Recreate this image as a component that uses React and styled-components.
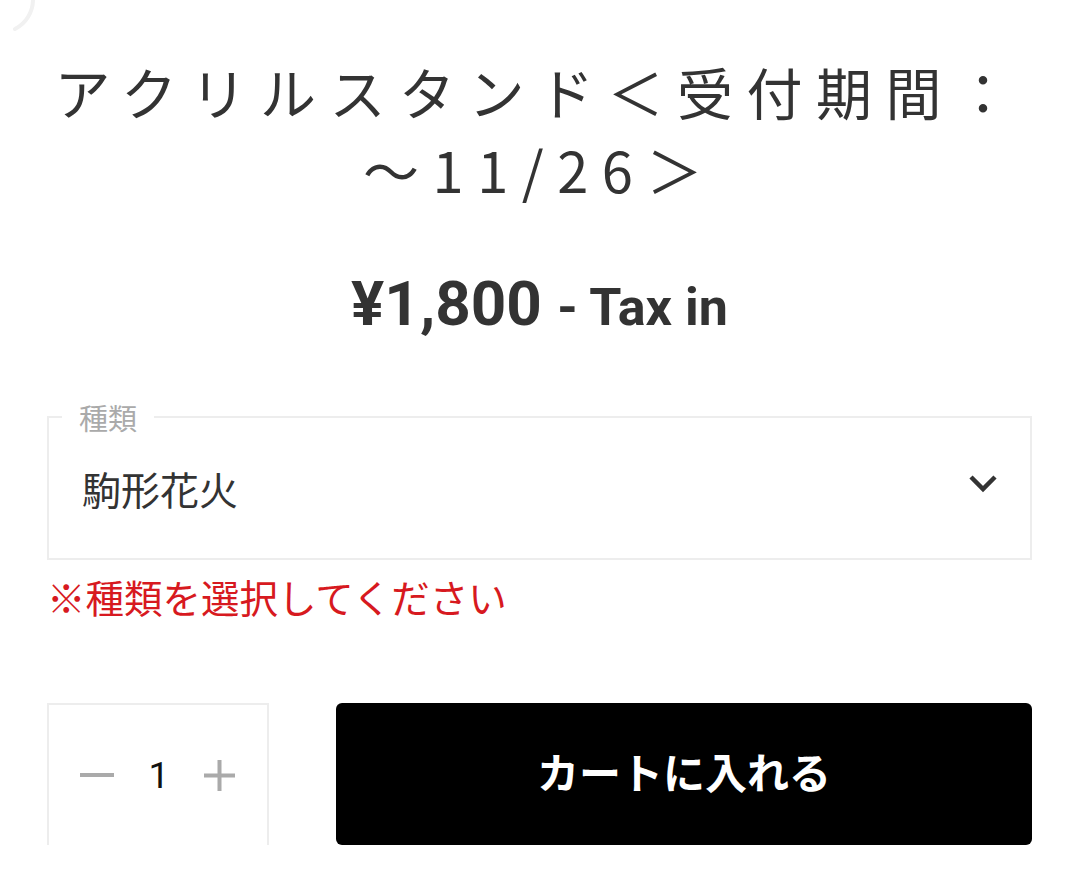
import React, { useState } from 'react';
import styled, { createGlobalStyle } from 'styled-components';

const GlobalStyle = createGlobalStyle`
  html, body { margin: 0; padding: 0; background: #fff; }
  body { font-family: "Noto Sans CJK JP", "Noto Sans", sans-serif; color: #333; }
`;

const Page = styled.div`
  position: relative;
  width: 1080px;
  height: 872px;
  box-sizing: border-box;
  padding: 52px 48px 0 47px;
  overflow: hidden;
`;

// faint spinner arc peeking in at the top-left corner
const CornerArc = styled.svg`
  position: absolute;
  left: 0;
  top: 0;
`;

const Title = styled.h1`
  margin: 0;
  text-align: center;
  font-size: 56px;
  font-weight: 400;
  line-height: 78px;
  letter-spacing: 13.5px;
  color: #333;
`;

const Price = styled.div`
  margin-top: 65px;
  text-align: center;
  font-family: Roboto, "Liberation Sans", sans-serif;
  font-weight: 700;
  font-size: 62px;
  line-height: 62px;
  color: #333;
`;

const TaxNote = styled.span`
  font-size: 52px;
`;

const Field = styled.fieldset`
  margin: 63px 0 0;
  padding: 0;
  border: 2px solid #ededed;
  min-width: 0;
`;

const Legend = styled.legend`
  margin-left: 13px;
  padding: 0 17px;
  font-size: 29px;
  line-height: 30px;
  color: #aaa;
`;

const SelectRow = styled.div`
  display: flex;
  align-items: center;
  justify-content: space-between;
  height: 141px;
  margin-top: -15px;
  padding: 0 32px 0 33px;
  cursor: pointer;
`;

const SelectValue = styled.span`
  font-size: 39px;
  line-height: 44px;
  color: #333;
`;

const Chevron = styled.svg`
  margin-bottom: 8px;
`;

const ErrorText = styled.p`
  margin: 15px 0 0;
  font-size: 38.5px;
  line-height: 42px;
  color: #d71920;
`;

const BuyRow = styled.div`
  display: flex;
  margin-top: 86px;
  height: 142px;
`;

const QtyBox = styled.div`
  box-sizing: border-box;
  width: 222px;
  display: flex;
  align-items: center;
  justify-content: space-between;
  padding: 0 32px 0 31px;
  border: 2px solid #ededed;
  border-bottom: none;
`;

const QtyButton = styled.button`
  display: flex;
  padding: 0;
  border: none;
  background: none;
  cursor: pointer;
`;

const QtyValue = styled.span`
  font-family: Roboto, "Liberation Sans", sans-serif;
  font-size: 37px;
  color: #111;
`;

const CartButton = styled.button`
  flex: 1;
  margin-left: 67px;
  padding: 0 0 8px;
  border: none;
  border-radius: 6px;
  background: #000;
  color: #fff;
  font-family: "Noto Sans CJK JP", sans-serif;
  font-size: 42px;
  font-weight: 700;
  cursor: pointer;
`;

const App = () => {
  const [qty, setQty] = useState(1);

  return (
    <Page>
      <GlobalStyle />
      <CornerArc width="40" height="36" viewBox="0 0 40 36">
        <path d="M33 0 A33 33 0 0 1 15 29" fill="none" stroke="#f1f1f1" strokeWidth="4" strokeLinecap="round" />
      </CornerArc>

      <Title>
        アクリルスタンド＜受付期間：<br />～11/26＞
      </Title>

      <Price>
        ¥1,800 <TaxNote>- Tax in</TaxNote>
      </Price>

      <Field>
        <Legend>種類</Legend>
        <SelectRow>
          <SelectValue>駒形花火</SelectValue>
          <Chevron width="30" height="19" viewBox="0 0 30 19">
            <polyline points="3,3 15,15 27,3" fill="none" stroke="#333" strokeWidth="4.5" />
          </Chevron>
        </SelectRow>
      </Field>

      <ErrorText>※種類を選択してください</ErrorText>

      <BuyRow>
        <QtyBox>
          <QtyButton onClick={() => setQty(Math.max(1, qty - 1))}>
            <svg width="34" height="6" viewBox="0 0 34 6">
              <rect x="0" y="1" width="34" height="4" fill="#aaa" />
            </svg>
          </QtyButton>
          <QtyValue>{qty}</QtyValue>
          <QtyButton onClick={() => setQty(qty + 1)}>
            <svg width="31" height="31" viewBox="0 0 31 31">
              <rect x="0" y="13.5" width="31" height="4" fill="#aaa" />
              <rect x="13.5" y="0" width="4" height="31" fill="#aaa" />
            </svg>
          </QtyButton>
        </QtyBox>
        <CartButton>カートに入れる</CartButton>
      </BuyRow>
    </Page>
  );
};

export default App;
